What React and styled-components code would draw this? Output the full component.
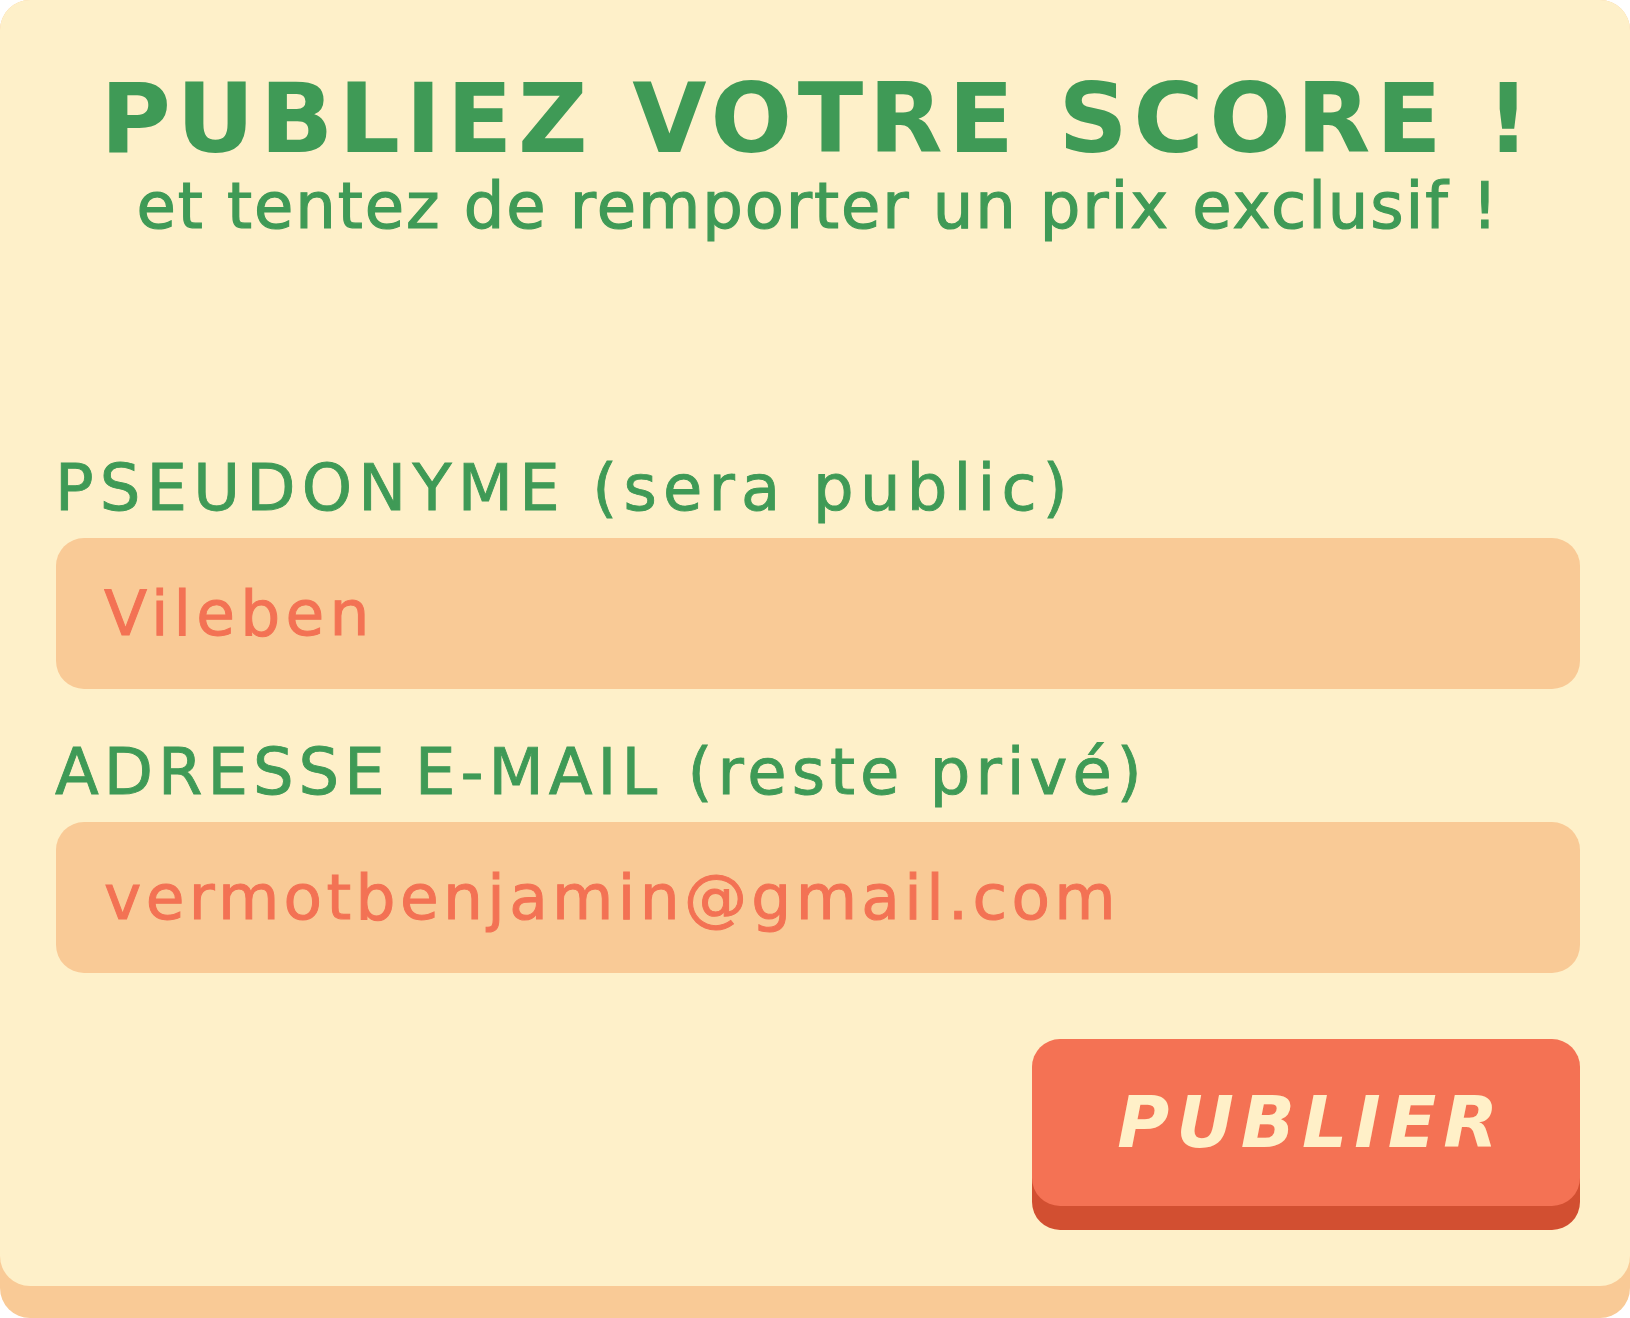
import React from 'react';
import styled, { createGlobalStyle } from 'styled-components';

// Carte "publier votre score" : titre, deux champs et le bouton d'envoi

const GlobalStyle = createGlobalStyle`
    html, body {
        margin: 0;
        padding: 0;
        background: #ffffff;
    }
    * {
        box-sizing: border-box;
    }
`;

// le bord orangé sous la carte
const CardBase = styled.div`
    width: 1630px;
    background-color: #f9ca96;
    border-radius: 30px;
    padding-bottom: 32px;
`;

const Card = styled.div`
    background-color: #fef0c9;
    border-radius: 30px;
    padding: 71px 50px 80px 56px;
    display: flex;
    flex-direction: column;
    font-family: "DejaVu Sans", "Liberation Sans", sans-serif;
`;

const Title = styled.h1`
    margin: 0;
    text-align: center;
    color: #3f9a56;
    font-size: 96px;
    line-height: 96px;
    font-weight: 700;
    letter-spacing: 5.6px;
`;

const Subtitle = styled.p`
    margin: 7px 0 0 0;
    text-align: center;
    color: #3f9a56;
    font-size: 64px;
    line-height: 64px;
    font-weight: 400;
    letter-spacing: 1.9px;
    -webkit-text-stroke: 1.2px #3f9a56;
`;

const Form = styled.form`
    margin-top: 218px;
    display: flex;
    flex-direction: column;
`;

const Label = styled.label`
    display: block;
    color: #3f9a56;
    font-size: 64px;
    line-height: 64px;
    font-weight: 400;
    letter-spacing: ${props => props.spacing}px;
    margin-top: ${props => props.first ? 0 : 51}px;
    margin-left: -1px;
    -webkit-text-stroke: 0.9px #3f9a56;
`;

const Field = styled.input`
    display: block;
    width: 100%;
    height: 151px;
    margin-top: 18px;
    padding: 0 48px;
    border: none;
    outline: none;
    border-radius: 28px;
    background-color: #f9ca96;
    color: #f37254;
    font-family: "DejaVu Sans", "Liberation Sans", sans-serif;
    font-size: 63px;
    letter-spacing: ${props => props.spacing}px;
    -webkit-text-stroke: 1px #f37254;
`;

const Actions = styled.div`
    margin-top: 66px;
    display: flex;
    justify-content: flex-end;
`;

const Button = styled.button`
    width: 548px;
    height: 167px;
    border: none;
    border-radius: 28px;
    background-color: #f47254;
    box-shadow: 0 24px 0 #d24f31;
    color: #fff0c8;
    font-family: "DejaVu Sans", "Liberation Sans", sans-serif;
    font-size: 71px;
    font-weight: 700;
    font-style: italic;
    letter-spacing: 7px;
    padding: 0 0 0 10px;
    cursor: pointer;
`;

const App = () => {
    return (
        <>
            <GlobalStyle />
            <CardBase>
                <Card>
                    <Title>PUBLIEZ VOTRE SCORE !</Title>
                    <Subtitle>et tentez de remporter un prix exclusif !</Subtitle>
                    <Form onSubmit={e => e.preventDefault()}>
                        <Label first spacing={6.2} htmlFor="pseudo">PSEUDONYME (sera public)</Label>
                        <Field id="pseudo" spacing={5.2} defaultValue="Vileben" />
                        <Label spacing={5} htmlFor="email">ADRESSE E-MAIL (reste privé)</Label>
                        <Field id="email" spacing={4.35} defaultValue="vermotbenjamin@gmail.com" />
                        <Actions>
                            <Button type="submit">PUBLIER</Button>
                        </Actions>
                    </Form>
                </Card>
            </CardBase>
        </>
    );
};

export default App;
